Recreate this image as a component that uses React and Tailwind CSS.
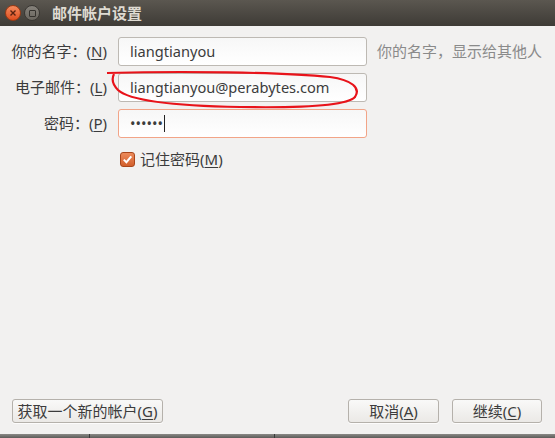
import React from "react";

const cjk = {
  fontFamily: '"Noto Sans", "Noto Sans CJK SC", sans-serif',
};

const Label = ({ text, hotkey }) => (
  <div className="w-[107px] text-right text-[15px] text-[#3c3c3c] whitespace-nowrap">
    {text}：(<span className="underline underline-offset-2">{hotkey}</span>)
  </div>
);

const Field = ({ value, focused, children }) => (
  <div
    className={`w-[249px] h-[29px] rounded-[3px] border bg-gradient-to-b from-[#f7f7f7] to-white flex items-center pl-[11px] text-[14.6px] text-[#3c3c3c] ${
      focused ? "border-[#f2a487]" : "border-[#bdb9b3]"
    }`}
  >
    {value}
    {children}
  </div>
);

const Button = ({ label, hotkey, className }) => (
  <button
    className={`h-[24px] rounded-[3px] border border-[#b5b1ab] bg-gradient-to-b from-[#f9f9f8] to-[#ebe9e6] text-[15px] text-[#3c3c3c] flex items-center justify-center shadow-[0_1px_0_rgba(255,255,255,0.8)] ${className}`}
  >
    {label}(<span className="underline underline-offset-2">{hotkey}</span>)
  </button>
);

export default function App() {
  return (
    <div
      style={cjk}
      className="w-[555px] h-[438px] bg-[#f2f1f0] flex flex-col relative overflow-hidden"
    >
      {/* Title bar */}
      <div className="h-[26px] bg-gradient-to-b from-[#5b5750] to-[#3e3b36] flex items-center pl-[5px]">
        <div className="w-[16px] h-[16px] rounded-full bg-gradient-to-b from-[#f58a5c] to-[#df4d1c] border border-[#9c3a14] flex items-center justify-center">
          <svg width="8" height="8" viewBox="0 0 8 8">
            <path d="M1.5 1.5 L6.5 6.5 M6.5 1.5 L1.5 6.5" stroke="#5a2210" strokeWidth="1.4" />
          </svg>
        </div>
        <div className="ml-[3px] w-[16px] h-[16px] rounded-full bg-gradient-to-b from-[#86827b] to-[#6a665f] border border-[#3a3733] flex items-center justify-center">
          <div className="w-[7px] h-[7px] border border-[#35322e] rounded-[1px]" />
        </div>
        <div className="ml-[12px] text-[15px] font-bold text-[#dfdbd2]">邮件帐户设置</div>
      </div>

      {/* Form */}
      <div className="flex flex-col gap-[7px] pt-[11px]">
        <div className="flex items-center gap-[11px]">
          <Label text="你的名字" hotkey="N" />
          <Field value="liangtianyou" />
          <div className="ml-[-1px] text-[15px] text-[#8a8a8a] whitespace-nowrap">你的名字，显示给其他人</div>
        </div>
        <div className="flex items-center gap-[11px]">
          <Label text="电子邮件" hotkey="L" />
          <Field value="liangtianyou@perabytes.com" />
        </div>
        <div className="flex items-center gap-[11px]">
          <Label text="密码" hotkey="P" />
          <Field value="••••••" focused>
            <span className="ml-[1px] w-[1px] h-[17px] bg-[#222]" />
          </Field>
        </div>
        <div className="flex items-center pl-[120px] mt-[3px] gap-[5px]">
          <div className="w-[15px] h-[15px] rounded-[3px] bg-gradient-to-b from-[#ec8a5a] to-[#d2602c] border border-[#a9461b] flex items-center justify-center">
            <svg width="11" height="11" viewBox="0 0 11 11">
              <path d="M1.8 5.6 L4.4 8.2 L9.3 2.4" stroke="white" strokeWidth="2" fill="none" />
            </svg>
          </div>
          <div className="text-[15px] text-[#3c3c3c]">
            记住密码(<span className="underline underline-offset-2">M</span>)
          </div>
        </div>
      </div>

      <div className="flex-1" />

      {/* Buttons */}
      <div className="flex items-center px-[12px] pb-[11px]">
        <Button label="获取一个新的帐户" hotkey="G" className="w-[151px]" />
        <div className="flex-1" />
        <Button label="取消" hotkey="A" className="w-[91px]" />
        <Button label="继续" hotkey="C" className="w-[90px] ml-[13px] mr-[1px]" />
      </div>

      {/* window behind */}
      <div className="h-[4px] bg-gradient-to-b from-[#8a8986] to-[#5d5c59] flex">
        <div className="ml-[89px] w-[1px] bg-[#3a3a3a]" />
        <div className="ml-[184px] w-[1px] bg-[#3a3a3a]" />
      </div>

      {/* red annotation */}
      <svg
        className="absolute left-0 top-0 pointer-events-none"
        width="555"
        height="438"
        viewBox="0 0 555 438"
      >
        <path
          d="M107 73 C 180 71, 280 72, 330 77 C 352 80, 361 88, 355 97 C 347 106, 300 108, 240 107 C 180 106, 130 101, 118 90 C 112 84, 112 78, 114 74"
          stroke="#e8131a"
          strokeWidth="2.2"
          fill="none"
        />
      </svg>
    </div>
  );
}
